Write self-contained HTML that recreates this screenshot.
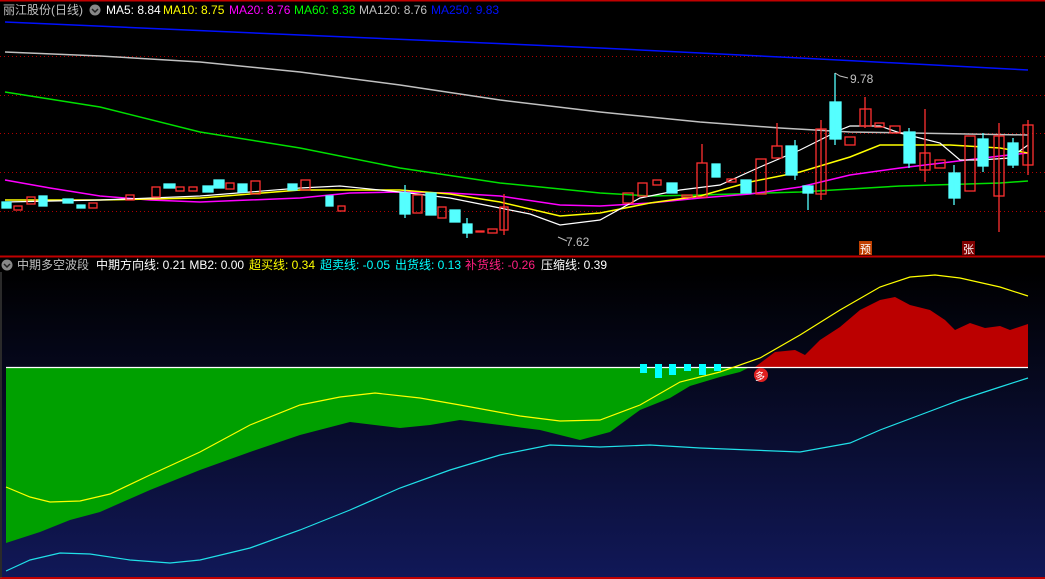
<!DOCTYPE html>
<html><head><meta charset="utf-8"><style>
body{margin:0;background:#000;width:1045px;height:579px;overflow:hidden;font-family:"Liberation Sans","Noto Sans CJK SC",sans-serif}
svg{display:block}
</style></head><body>
<svg width="1045" height="579" xmlns="http://www.w3.org/2000/svg" font-family="Liberation Sans, Noto Sans CJK SC, sans-serif">
<defs><linearGradient id="g" x1="0" y1="0" x2="0" y2="1"><stop offset="0" stop-color="#000"/><stop offset="1" stop-color="#111858"/></linearGradient></defs>
<rect x="0" y="0" width="1045" height="579" fill="#000"/>
<rect x="2" y="272" width="1043" height="305" fill="url(#g)"/>
<line x1="0" y1="0.5" x2="1045" y2="0.5" stroke="#c00000" stroke-width="2"/>
<line x1="0" y1="256.5" x2="1045" y2="256.5" stroke="#c00000" stroke-width="2"/>
<line x1="0" y1="578" x2="1045" y2="578" stroke="#c00000" stroke-width="2"/>
<line x1="1" y1="272" x2="1" y2="578" stroke="#555" stroke-width="1"/>
<g stroke="#b00000" stroke-dasharray="1,3" stroke-width="1">
<line x1="0" y1="56.5" x2="1045" y2="56.5"/><line x1="0" y1="95.5" x2="1045" y2="95.5"/><line x1="0" y1="133.5" x2="1045" y2="133.5"/><line x1="0" y1="172.5" x2="1045" y2="172.5"/><line x1="0" y1="211.5" x2="1045" y2="211.5"/>
</g>
<!-- MAs -->
<g fill="none" stroke-width="1.5">
<polyline stroke="#0010ff" points="5,22 300,35 600,48 800,58 1028,70"/>
<polyline stroke="#c0c0c0" points="5,52 100,56 200,62 300,72 400,85 500,100 600,112 700,122 780,128 850,132 1028,135"/>
<polyline stroke="#00e000" points="5,92 100,107 200,132 300,148 400,168 500,183 600,193 650,196 700,195 800,192 900,186 1000,183 1028,181"/>
<polyline stroke="#ff00ff" points="5,180 50,188 100,196 150,200 200,202 300,198 350,193 400,192 450,193 500,196 560,205 600,206 650,203 700,198 750,194 800,187 850,175 900,168 950,162 1000,156 1028,153"/>
<polyline stroke="#ffff00" points="5,200 100,200 200,198 300,190 400,190 450,194 500,202 560,216 600,213 650,203 700,196 750,182 800,172 850,157 880,145 950,145 1000,148 1028,153"/>
<polyline stroke="#ffffff" stroke-width="1.2" points="5,202 100,200 200,196 300,188 340,186 400,192 450,198 500,208 530,214 560,225 600,220 640,198 680,190 720,185 760,167 800,150 840,130 850,126 880,126 900,133 940,143 960,160 980,160 1010,158 1028,145"/>
</g>
<!-- candles -->
<g stroke-width="1.3">
<g fill="#55ffff" stroke="#55ffff">
<rect x="2" y="202" width="9" height="6"/><rect x="39" y="196" width="8" height="10"/><rect x="63" y="199" width="10" height="4"/><rect x="77" y="205" width="8" height="3"/>
<rect x="164" y="184" width="11" height="4"/><rect x="203" y="186" width="10" height="6"/><rect x="214" y="180" width="10" height="8"/><rect x="238" y="184" width="9" height="8"/><rect x="288" y="184" width="9" height="6"/>
<rect x="326" y="196" width="7" height="10"/><rect x="400" y="193" width="10" height="21"/><rect x="426" y="193" width="10" height="22"/><rect x="450" y="210" width="10" height="12"/><rect x="463" y="224" width="9" height="9"/>
<rect x="667" y="183" width="10" height="10"/><rect x="712" y="164" width="8" height="13"/><rect x="741" y="180" width="10" height="13"/><rect x="786" y="146" width="11" height="29"/><rect x="803" y="186" width="10" height="7"/>
<rect x="830" y="102" width="11" height="37"/><rect x="904" y="132" width="11" height="31"/><rect x="949" y="173" width="11" height="25"/><rect x="978" y="139" width="10" height="27"/><rect x="1008" y="143" width="10" height="22"/>
</g>
<g stroke="#55ffff"><line x1="835" y1="73" x2="835" y2="145"/><line x1="808" y1="193" x2="808" y2="210"/><line x1="954" y1="165" x2="954" y2="205"/><line x1="983" y1="133" x2="983" y2="172"/><line x1="1013" y1="138" x2="1013" y2="168"/><line x1="909" y1="128" x2="909" y2="168"/><line x1="405" y1="185" x2="405" y2="218"/><line x1="467" y1="218" x2="467" y2="238"/><line x1="795" y1="140" x2="795" y2="180"/></g>
<g fill="none" stroke="#ff3030">
<rect x="14" y="206" width="8" height="4"/><rect x="27" y="197" width="8" height="7"/><rect x="89" y="203" width="8" height="5"/><rect x="126" y="195" width="8" height="5"/><rect x="152" y="187" width="8" height="10"/>
<rect x="176" y="187" width="8" height="4"/><rect x="189" y="187" width="8" height="4"/><rect x="226" y="183" width="8" height="6"/><rect x="251" y="181" width="9" height="13"/><rect x="301" y="180" width="9" height="10"/>
<rect x="338" y="206" width="7" height="5"/><rect x="413" y="195" width="9" height="18"/><rect x="438" y="207" width="8" height="11"/><rect x="476" y="231" width="8" height="1"/><rect x="488" y="229" width="9" height="4"/><rect x="500" y="207" width="8" height="23"/>
<rect x="623" y="193" width="10" height="10"/><rect x="638" y="183" width="9" height="13"/><rect x="653" y="180" width="8" height="5"/><rect x="682" y="195" width="10" height="2"/><rect x="697" y="163" width="10" height="34"/>
<rect x="727" y="179" width="9" height="3"/><rect x="756" y="159" width="10" height="35"/><rect x="772" y="146" width="10" height="12"/><rect x="816" y="129" width="10" height="65"/><rect x="845" y="137" width="10" height="8"/>
<rect x="860" y="109" width="11" height="17"/><rect x="875" y="123" width="9" height="4"/><rect x="890" y="126" width="10" height="7"/><rect x="920" y="153" width="10" height="17"/><rect x="935" y="160" width="10" height="8"/>
<rect x="965" y="136" width="10" height="55"/><rect x="994" y="136" width="10" height="60"/><rect x="1023" y="125" width="10" height="40"/>
</g>
<g stroke="#ff3030"><line x1="702" y1="144" x2="702" y2="163"/><line x1="777" y1="123" x2="777" y2="146"/><line x1="925" y1="109" x2="925" y2="182"/><line x1="999" y1="123" x2="999" y2="232"/><line x1="821" y1="120" x2="821" y2="200"/><line x1="865" y1="97" x2="865" y2="128"/><line x1="1028" y1="120" x2="1028" y2="175"/><line x1="504" y1="194" x2="504" y2="235"/></g>
</g>
<g font-size="12" fill="#c0c0c0">
<polyline points="835,73 840,76 848,78" fill="none" stroke="#c0c0c0"/>
<text x="850" y="83">9.78</text>
<polyline points="567,241 558,237" fill="none" stroke="#c0c0c0"/>
<text x="566" y="246">7.62</text>
</g>
<rect x="859" y="241" width="13" height="14" fill="#c04000"/><text x="860" y="253" font-size="11" fill="#fff">预</text>
<rect x="962" y="241" width="13" height="14" fill="#800000"/><text x="963" y="253" font-size="11" fill="#fff">张</text>
<!-- header text -->
<g font-size="12">
<text x="3" y="14" fill="#c0c0c0">丽江股份(日线)</text>
<circle cx="95" cy="10" r="5.5" fill="#888"/><path d="M92 9 L95 12 L98 9" stroke="#222" fill="none" stroke-width="1.5"/>
<text x="106" y="14" fill="#fff">MA5: 8.84</text>
<text x="163" y="14" fill="#ffff00">MA10: 8.75</text>
<text x="229" y="14" fill="#ff00ff">MA20: 8.76</text>
<text x="294" y="14" fill="#00ff00">MA60: 8.38</text>
<text x="359" y="14" fill="#c0c0c0">MA120: 8.76</text>
<text x="431" y="14" fill="#0010ff">MA250: 9.83</text>
<circle cx="7" cy="265" r="5.5" fill="#888"/><path d="M4 264 L7 267 L10 264" stroke="#222" fill="none" stroke-width="1.5"/>
<text x="17" y="269" fill="#c0c0c0">中期多空波段</text>
<text x="96" y="269" fill="#fff">中期方向线: 0.21  MB2: 0.00</text>
<text x="249" y="269" fill="#ffff00">超买线: 0.34</text>
<text x="320" y="269" fill="#00ffff">超卖线: -0.05</text>
<text x="395" y="269" fill="#00ffff">出货线: 0.13</text>
<text x="465" y="269" fill="#ff2080">补货线: -0.26</text>
<text x="541" y="269" fill="#fff">压缩线: 0.39</text>
</g>
<!-- bottom panel -->
<polygon fill="#00a000" points="6,367 750,367 740,372 720,377 690,386 670,398 640,410 610,432 580,440 540,430 500,425 460,420 430,425 400,428 350,422 300,435 250,452 200,470 150,490 100,512 70,520 40,532 6,543"/>
<polygon fill="#bb0000" points="755,367 775,352 795,350 805,355 820,340 840,327 860,310 880,300 895,297 910,305 930,310 945,320 955,330 970,323 985,328 1000,326 1010,330 1028,324 1028,367"/>
<line x1="6" y1="367.5" x2="1028" y2="367.5" stroke="#fff" stroke-width="1.3"/>
<g fill="#00ffff"><rect x="640" y="364" width="7" height="9"/><rect x="655" y="364" width="7" height="14"/><rect x="669" y="364" width="7" height="11"/><rect x="684" y="364" width="7" height="7"/><rect x="699" y="364" width="7" height="11"/><rect x="714" y="364" width="7" height="7"/></g>
<polyline fill="none" stroke="#ffff00" stroke-width="1.2" points="6,487 30,497 50,502 80,501 110,494 150,475 200,452 250,425 300,405 340,397 375,393 420,398 460,405 520,416 560,421 600,420 640,405 680,382 720,372 760,358 800,335 840,310 880,287 910,277 935,275 960,278 1000,287 1028,296"/>
<polyline fill="none" stroke="#20e0e8" stroke-width="1.2" points="6,571 30,560 60,553 90,554 130,560 170,563 200,560 250,548 300,530 350,510 400,488 450,470 500,455 550,445 600,447 650,445 700,448 750,450 800,452 850,443 880,430 920,415 960,400 1000,387 1028,378"/>
<circle cx="761" cy="375" r="7" fill="#e02020"/><text x="755" y="380" font-size="10" fill="#fff">多</text>
</svg>
</body></html>
